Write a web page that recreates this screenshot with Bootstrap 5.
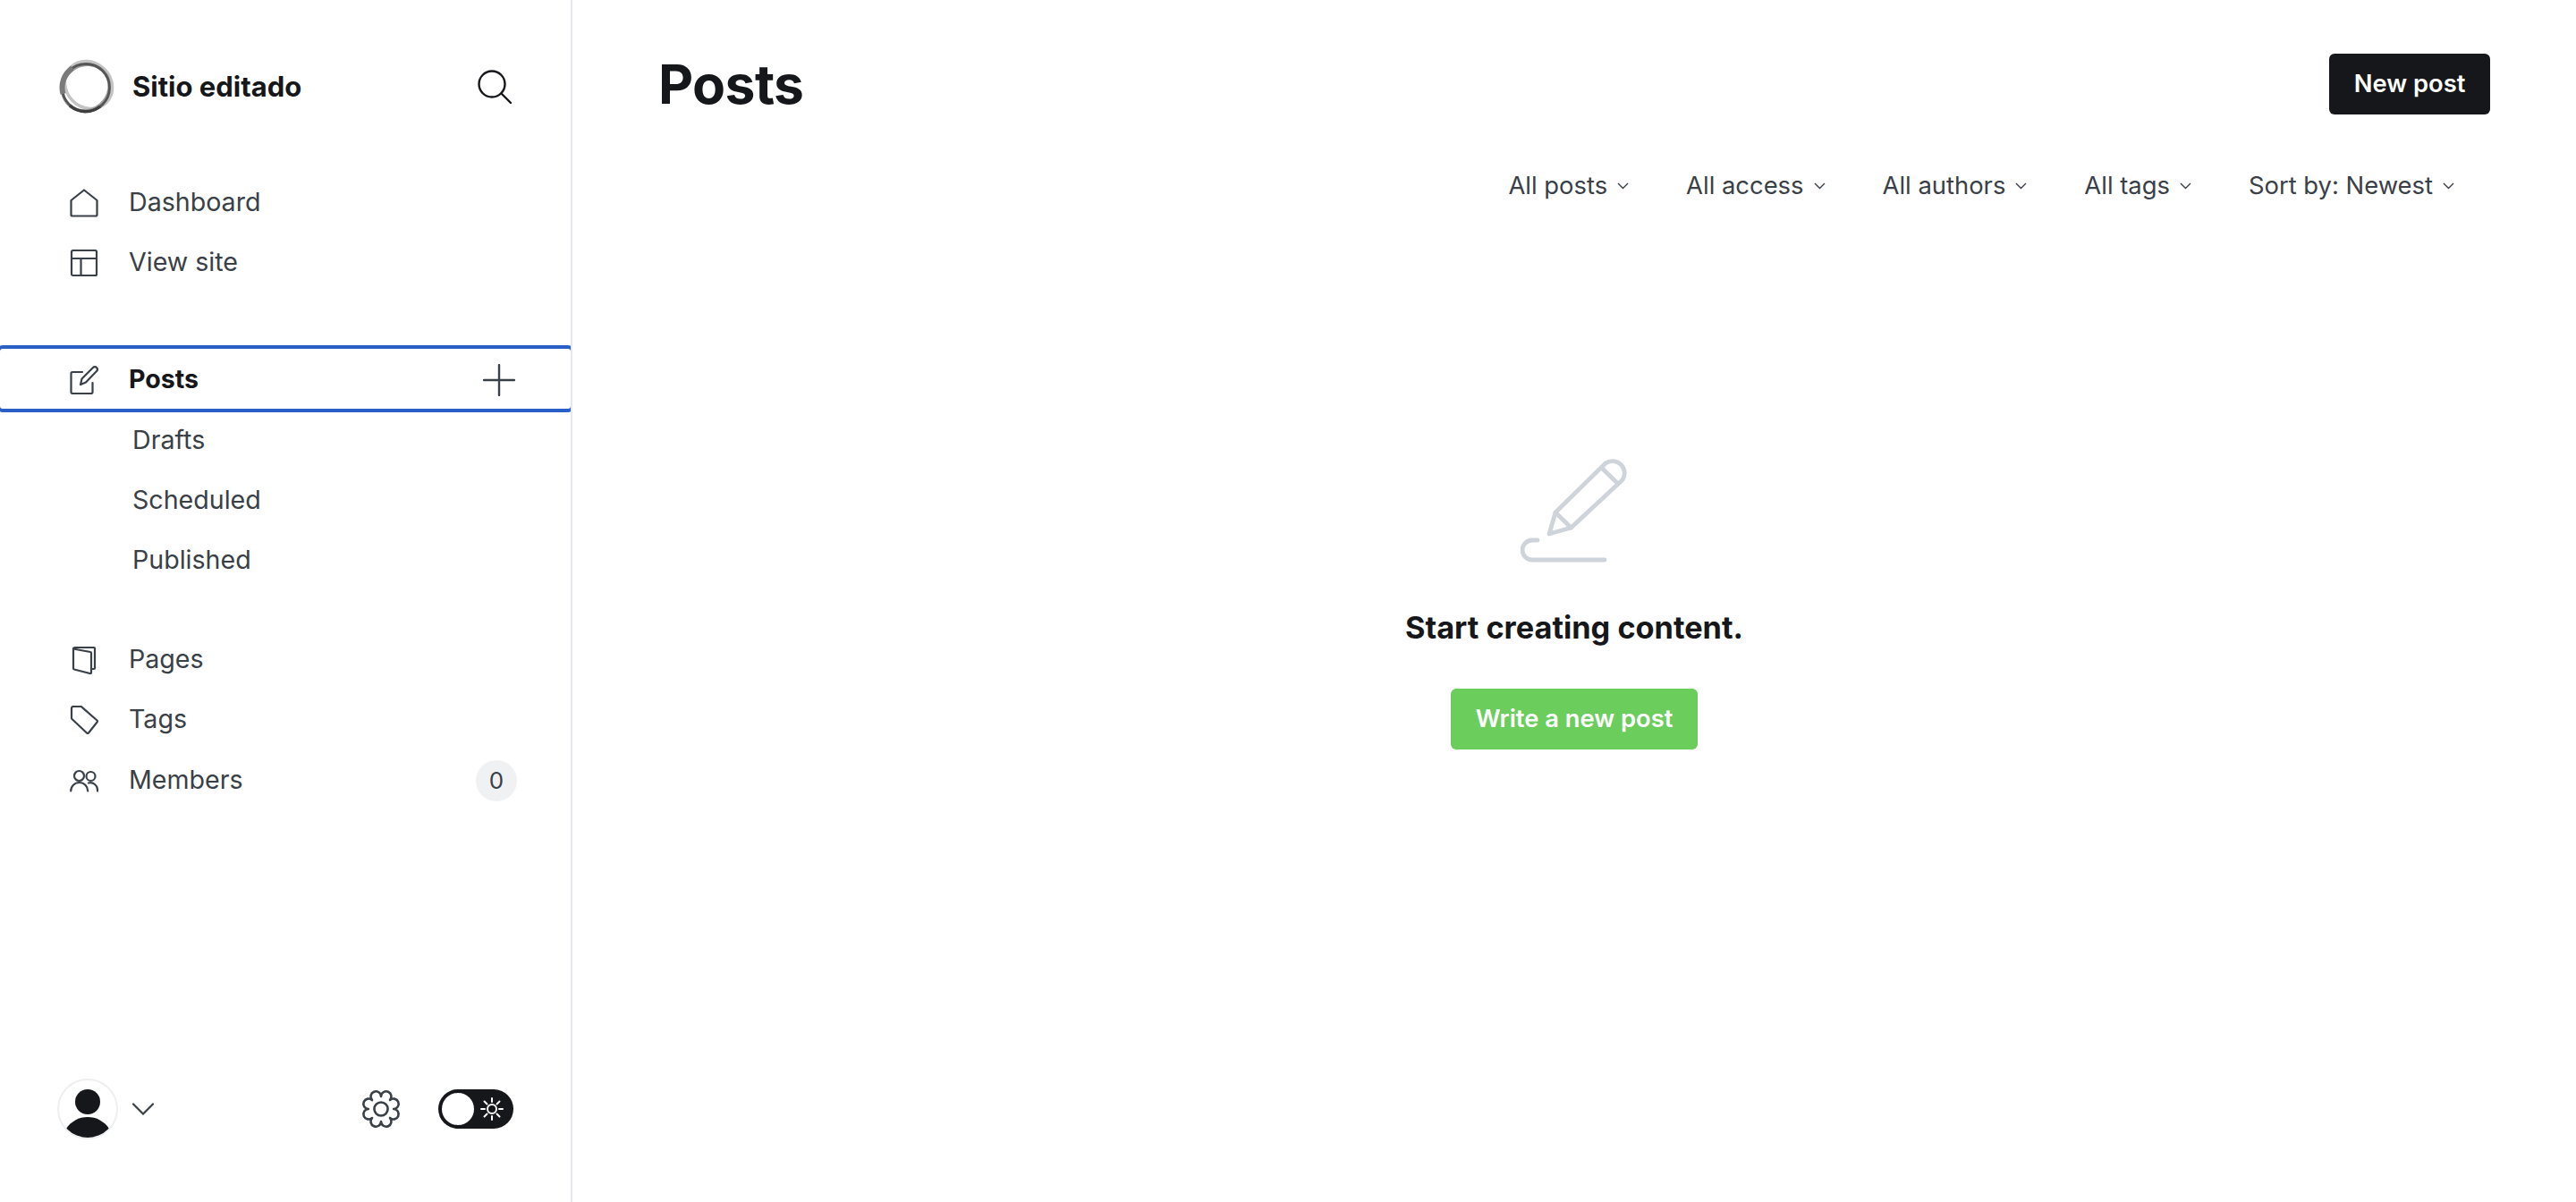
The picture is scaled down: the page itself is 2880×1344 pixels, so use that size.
<!DOCTYPE html>
<html lang="en">
<head>
    <meta charset="UTF-8">
    <meta name="viewport" content="width=device-width, initial-scale=1.0">
    <title>Posts - Sitio editado</title>
    <link href="https://cdn.jsdelivr.net/npm/bootstrap@5.3.2/dist/css/bootstrap.min.css" rel="stylesheet">
    <style>
        body {
            font-family: Inter, "Liberation Sans", sans-serif;
            color: #15171a;
            background: #fff;
            height: 1344px;
            overflow: hidden;
        }
        svg { display: block; flex: none; }

        /* sidebar */
        .side-panel {
            width: 640px;
            height: 1344px;
            flex: none;
            border-right: 2px solid #e6e9eb;
            overflow: hidden;
        }
        .side-head {
            height: 192px;
            padding: 2px 66px 0 66px;
        }
        .site-name {
            font-size: 31px;
            font-weight: 700;
            margin-left: 20px;
        }
        .side-link.nav-link {
            display: flex;
            align-items: center;
            height: 67px;
            padding: 2px 62px 0 78px;
            font-size: 28.6px;
            color: #394047;
        }
        .side-link svg.ico { width: 32px; height: 32px; margin-right: 34px; }
        .side-link.now {
            color: #15171a;
            font-weight: 700;
            width: 638px;
            outline: 4px solid #2a5fc8;
            border-radius: 3px;
        }
        .side-sub.nav-link {
            display: block;
            height: 67px;
            padding: 0 0 0 148px;
            line-height: 69px;
            font-size: 28.6px;
            color: #394047;
        }
        .nav-gap-a { margin-top: 64px; }
        .nav-gap-b { margin-top: 45px; }
        .side-link.last-row { margin-top: 1px; }
        .side-count {
            width: 46px;
            height: 46px;
            margin-right: -2px;
            border-radius: 50%;
            background: #eff1f3;
            font-size: 26px;
            color: #394047;
        }
        .side-foot {
            padding: 0 64px 70px 64px;
        }
        .user-pic {
            width: 68px;
            height: 68px;
            border-radius: 50%;
            border: 2px solid #eeeff1;
            overflow: hidden;
        }
        .mode-switch {
            width: 84px;
            height: 44px;
            border-radius: 22px;
            background: #15171a;
            padding: 4px;
            margin-left: 42px;
        }
        .mode-knob {
            width: 36px;
            height: 36px;
            border-radius: 50%;
            background: #fff;
        }
        .sun-ico { margin-right: 7px; }

        /* main */
        .main-area {
            padding: 0 96px;
        }
        .top-line {
            padding-top: 60px;
            height: 128px;
        }
        .page-title {
            font-size: 60.5px;
            font-weight: 700;
            line-height: 68px;
            letter-spacing: -.6px;
            margin: 0;
            color: #15171a;
        }
        .btn-black.btn {
            background: #15171a;
            color: #fff;
            border: 0;
            border-radius: 6px;
            height: 68px;
            width: 180px;
            padding: 1px 0 0;
            font-size: 27.3px;
            font-weight: 600;
        }
        .filter-line {
            height: 68px;
            margin-top: 46px;
            padding-right: 40px;
            gap: 64px;
        }
        .filter-item {
            font-size: 27.4px;
            color: #394047;
            gap: 11px;
        }
        .empty-box {
            margin-top: 270px;
        }
        .empty-text {
            font-size: 34.3px;
            font-weight: 700;
            line-height: 44px;
            margin: 50px 0 46px;
            color: #15171a;
        }
        .btn-green.btn {
            background: #6acd5c;
            color: #fff;
            border: 0;
            border-radius: 6px;
            width: 276px;
            height: 68px;
            padding: 1px 0 0;
            font-size: 27.3px;
            font-weight: 600;
        }
    </style>
</head>
<body>
<div class="d-flex">

    <!-- Barra lateral -->
    <aside class="side-panel d-flex flex-column">
        <div class="side-head d-flex align-items-center justify-content-between">
            <div class="d-flex align-items-center">
                <svg width="62" height="62" viewBox="0 0 62 62" fill="none">
                    <ellipse cx="33" cy="29" rx="28" ry="25" stroke="#c4c4c4" stroke-width="3.500" transform="rotate(45 33 29)"/>
                    <ellipse cx="30" cy="32" rx="27" ry="25" stroke="#a0a0a0" stroke-width="3.500" transform="rotate(-40 30 32)"/>
                    <circle cx="30" cy="32" r="26.500" stroke="#555" stroke-width="2.800"/>
                    <path d="M4.500 39A26.500 26.500 0 0 1 15 10" stroke="#7a7a7a" stroke-width="6"/>
                    <path d="M12 52A26.500 26.500 0 0 0 46 53" stroke="#3f3f3f" stroke-width="3.500"/>
                </svg>
                <span class="site-name">Sitio editado</span>
            </div>
            <svg width="38" height="38" viewBox="0 0 38 38" fill="none" stroke="#15171a" stroke-width="2.400" stroke-linecap="round">
                <circle cx="16" cy="16" r="14.500"/>
                <path d="M26.500 26.500L37 37"/>
            </svg>
        </div>

        <nav class="nav flex-column">
            <a class="nav-link side-link" href="#">
                <svg class="ico" viewBox="0 0 32 32" fill="none" stroke="#394047" stroke-width="2.200" stroke-linejoin="round"><path d="M1.500 13L16 1.500 30.500 13V29a1.500 1.500 0 0 1-1.500 1.500H3A1.500 1.500 0 0 1 1.500 29z"/></svg>
                Dashboard
            </a>
            <a class="nav-link side-link" href="#">
                <svg class="ico" viewBox="0 0 32 32" fill="none" stroke="#394047" stroke-width="2.200" stroke-linejoin="round"><rect x="2" y="2" width="28" height="28" rx="1.500"/><path d="M2 11h28M12.500 11v19"/></svg>
                View site
            </a>
        </nav>

        <nav class="nav flex-column nav-gap-a">
            <a class="nav-link side-link now" href="#">
                <svg class="ico" viewBox="0 0 32 32" fill="none" stroke="#394047" stroke-width="2.200" stroke-linejoin="round" stroke-linecap="round"><path d="M14 7H3a1.500 1.500 0 0 0-1.500 1.500v21A1.500 1.500 0 0 0 3 31h21a1.500 1.500 0 0 0 1.500-1.500V19"/><path d="M12 21l1.500-6.500L26 2a2.500 2.500 0 0 1 4 4L18 18.500z"/></svg>
                Posts
                <svg class="ms-auto" width="36" height="36" viewBox="0 0 36 36" fill="none" stroke="#394047" stroke-width="2.400" stroke-linecap="round"><path d="M18 1v34M1 18h34"/></svg>
            </a>
            <a class="nav-link side-sub" href="#">Drafts</a>
            <a class="nav-link side-sub" href="#">Scheduled</a>
            <a class="nav-link side-sub" href="#">Published</a>
        </nav>

        <nav class="nav flex-column nav-gap-b">
            <a class="nav-link side-link" href="#">
                <svg class="ico" viewBox="0 0 32 32" fill="none" stroke="#394047" stroke-width="2.200" stroke-linejoin="round" stroke-linecap="round"><path d="M4 3.500Q4 2 6 2H27a1 1 0 0 1 1 1V25a1 1 0 0 1-1 1H24"/><path d="M4 3.500L23 7a1 1 0 0 1 1 1V30a1 1 0 0 1-1.300 1L5 26.500a1.500 1.500 0 0 1-1-1.500z"/></svg>
                Pages
            </a>
            <a class="nav-link side-link" href="#">
                <svg class="ico" viewBox="0 0 32 32" fill="none" stroke="#394047" stroke-width="2.200" stroke-linejoin="round"><path d="M2 3a2 2 0 0 1 2-2h8a2 2 0 0 1 1.500.6L30.500 16.500a1.500 1.500 0 0 1 0 2L21 30.500a1.500 1.500 0 0 1-2 0L2.500 15a2 2 0 0 1-.5-1.300z"/></svg>
                Tags
            </a>
            <a class="nav-link side-link last-row" href="#">
                <svg class="ico" viewBox="0 0 32 32" fill="none" stroke="#394047" stroke-width="2.200" stroke-linecap="round"><circle cx="10.500" cy="10.500" r="5.500"/><circle cx="23.500" cy="11" r="5"/><path d="M1.200 27.500a9.500 9.500 0 0 1 19 0M21 18.500a8 8 0 0 1 10 8v1"/></svg>
                Members
                <span class="side-count ms-auto d-flex align-items-center justify-content-center">0</span>
            </a>
        </nav>

        <div class="side-foot mt-auto d-flex align-items-center justify-content-between">
            <div class="d-flex align-items-center">
                <div class="user-pic">
                    <svg width="64" height="64" viewBox="0 0 64 64" fill="#15171a">
                        <circle cx="32" cy="24" r="14"/>
                        <path d="M8 54A28.600 28.600 0 0 1 56 54A32 32 0 0 1 8 54z"/>
                    </svg>
                </div>
                <svg class="ms-3" width="24" height="14" viewBox="0 0 24 14" fill="none" stroke="#394047" stroke-width="2.200" stroke-linecap="round"><path d="M1 1.500l11 11 11-11"/></svg>
            </div>
            <div class="d-flex align-items-center">
                <svg width="44" height="44" viewBox="0 0 42 42" fill="none" stroke="#394047" stroke-width="2.500" stroke-linejoin="round">
                    <circle cx="21" cy="21" r="7.200"/>
                    <path d="M21 7.500A5.500 5.500 0 1 1 30.550 11.450A5.500 5.500 0 1 1 34.500 21A5.500 5.500 0 1 1 30.550 30.550A5.500 5.500 0 1 1 21 34.500A5.500 5.500 0 1 1 11.450 30.550A5.500 5.500 0 1 1 7.500 21A5.500 5.500 0 1 1 11.450 11.450A5.500 5.500 0 1 1 21 7.500z"/>
                </svg>
                <div class="mode-switch d-flex align-items-center justify-content-between">
                    <div class="mode-knob"></div>
                    <svg class="sun-ico" width="26" height="26" viewBox="0 0 26 26" fill="none" stroke="#fff" stroke-width="2" stroke-linecap="round">
                        <circle cx="13" cy="13" r="5"/>
                        <path d="M13 1v4M13 21v4M1 13h4M21 13h4M4.500 4.500l3 3M18.500 18.500l3 3M4.500 21.500l3-3M18.500 7.500l3-3"/>
                    </svg>
                </div>
            </div>
        </div>
    </aside>

    <!-- Contenido principal -->
    <main class="main-area flex-grow-1">
        <div class="top-line d-flex justify-content-between align-items-start">
            <h1 class="page-title">Posts</h1>
            <button class="btn btn-black" type="button">New post</button>
        </div>

        <div class="filter-line d-flex justify-content-end align-items-center">
            <span class="filter-item d-flex align-items-center">All posts <svg width="13" height="8" viewBox="0 0 13 8" fill="none" stroke="#394047" stroke-width="1.400"><path d="M1 1l5.500 5.500L12 1"/></svg></span>
            <span class="filter-item d-flex align-items-center">All access <svg width="13" height="8" viewBox="0 0 13 8" fill="none" stroke="#394047" stroke-width="1.400"><path d="M1 1l5.500 5.500L12 1"/></svg></span>
            <span class="filter-item d-flex align-items-center">All authors <svg width="13" height="8" viewBox="0 0 13 8" fill="none" stroke="#394047" stroke-width="1.400"><path d="M1 1l5.500 5.500L12 1"/></svg></span>
            <span class="filter-item d-flex align-items-center">All tags <svg width="13" height="8" viewBox="0 0 13 8" fill="none" stroke="#394047" stroke-width="1.400"><path d="M1 1l5.500 5.500L12 1"/></svg></span>
            <span class="filter-item d-flex align-items-center">Sort by: Newest <svg width="13" height="8" viewBox="0 0 13 8" fill="none" stroke="#394047" stroke-width="1.400"><path d="M1 1l5.500 5.500L12 1"/></svg></span>
        </div>

        <div class="empty-box d-flex flex-column align-items-center">
            <svg width="120" height="118" viewBox="0 0 120 118" fill="none" stroke="#ced4d9" stroke-width="4.800" stroke-linecap="round" stroke-linejoin="round">
                <path d="M39 61L95 6A13.500 13.500 0 0 1 114 24.500L56.500 78"/>
                <path d="M39 61L32 85L56.500 78zM90.500 11L107 27"/>
                <path d="M19 92H13A11 11 0 0 0 13 114H94"/>
            </svg>
            <p class="empty-text">Start creating content.</p>
            <button class="btn btn-green" type="button">Write a new post</button>
        </div>
    </main>
</div>
<script src="https://cdn.jsdelivr.net/npm/bootstrap@5.3.2/dist/js/bootstrap.bundle.min.js"></script>
</body>
</html>
